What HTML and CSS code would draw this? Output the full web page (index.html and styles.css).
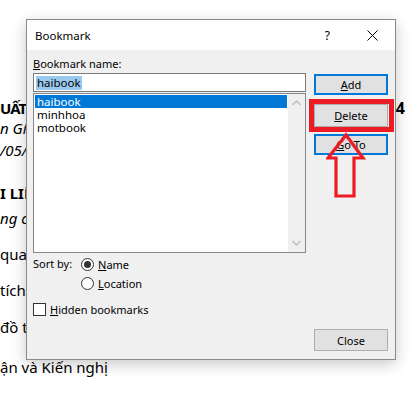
FILE: index.html
```html
<!DOCTYPE html>
<html>
<head>
<meta charset="utf-8">
<link rel="stylesheet" href="styles.css">
</head>
<body>
<div class="doc">
  <div class="row1 bold"><span class="first">UẤT</span><span class="four">4</span></div>
  <div class="line ital">n Gi</div>
  <div class="line ital g2">/05/</div>
  <div class="line bold g23">I LIỆ</div>
  <div class="line ital g5">ng c</div>
  <div class="line g16">qua</div>
  <div class="line g16">tích</div>
  <div class="line g17">đồ t</div>
  <div class="line g20">ận và Kiến nghị</div>
</div>

<div class="dialog">
  <div class="titlebar">
    <span class="title">Bookmark</span>
    <span class="help">?</span>
    <svg class="close-x" width="11" height="11" viewBox="0 0 11 11"><path d="M0.5 0.5 L10.5 10.5 M10.5 0.5 L0.5 10.5" stroke="#000" stroke-width="1" fill="none"/></svg>
  </div>
  <div class="body">
    <div class="left">
      <div class="label"><u>B</u>ookmark name:</div>
      <div class="input"><span class="sel">haibook</span></div>
      <div class="list">
        <div class="items">
          <div class="item active">haibook</div>
          <div class="item">minhhoa</div>
          <div class="item">motbook</div>
        </div>
        <div class="scroll">
          <svg width="9" height="6" viewBox="0 0 9 6"><path d="M0.5 5 L4.5 1 L8.5 5" stroke="#c2c2c2" stroke-width="1.6" fill="none"/></svg>
          <svg width="9" height="6" viewBox="0 0 9 6"><path d="M0.5 1 L4.5 5 L8.5 1" stroke="#c2c2c2" stroke-width="1.6" fill="none"/></svg>
        </div>
      </div>
      <div class="sort">
        <span class="sortlbl">Sort by:</span>
        <div class="radios">
          <div class="radio-row"><span class="radio on"><span class="dot"></span></span><span><u>N</u>ame</span></div>
          <div class="radio-row"><span class="radio"></span><span><u>L</u>ocation</span></div>
        </div>
      </div>
      <div class="check-row"><span class="check"></span><span><u>H</u>idden bookmarks</span></div>
    </div>
    <div class="right">
      <div class="btn focus b-add"><u>A</u>dd</div>
      <div class="btn b-del"><u>D</u>elete<span class="redbox"></span></div>
      <div class="btn focus b-go"><u>G</u>o To</div>
      <div class="btn b-close">Close</div>
    </div>
  </div>
</div>

<svg class="arrow" width="40" height="68" viewBox="0 0 40 68">
  <path d="M20 3 L37 26 L28 26 L28 64 L10 64 L10 26 L2 26 Z" fill="none" stroke="#ed1c24" stroke-width="3.2" stroke-linejoin="miter"/>
</svg>
</body>
</html>
```
FILE: styles.css
```css
html, body {
  margin: 0;
  padding: 0;
  background: #fff;
  width: 420px;
  height: 393px;
  overflow: hidden;
}

.doc {
  padding-top: 98px;
  font-family: "Noto Sans", "Open Sans", sans-serif;
  font-size: 15px;
  color: #000;
}

.line {
  height: 20px;
  line-height: 20px;
  white-space: nowrap;
}

.bold { font-weight: bold; }
.ital { font-style: italic; }
.row1 {
  height: 20px;
  line-height: 20px;
  display: flex;
  justify-content: space-between;
  padding-right: 15px;
}
.first { letter-spacing: -1px; }
.four { font-size: 16px; }
.g2 { margin-top: 2px; }
.g23 { margin-top: 23px; }
.g5 { margin-top: 5px; }
.g16 { margin-top: 16px; }
.g17 { margin-top: 17px; }
.g20 { margin-top: 20px; }

.dialog {
  position: absolute;
  left: 26px;
  top: 19px;
  width: 368px;
  height: 339px;
  border: 1px solid #8a8a8a;
  background: #f0f0f0;
  box-shadow: 0 4px 14px rgba(0, 0, 0, 0.22);
  display: flex;
  flex-direction: column;
  font-family: "Segoe UI", "Noto Sans", sans-serif;
  font-size: 11px;
  color: #000;
}

.titlebar {
  height: 30px;
  background: #fff;
  display: flex;
  align-items: center;
  padding-left: 8px;
  flex-shrink: 0;
}
.title { font-size: 11.5px; flex: 1; }
.help { font-size: 12px; margin-right: 37px; }
.close-x { margin-right: 17px; }

.body {
  flex: 1;
  display: flex;
  padding: 6px 7px 8px 6px;
  gap: 8px;
}

.left {
  width: 273px;
  display: flex;
  flex-direction: column;
}

.label {
  height: 16px;
  line-height: 16px;
}

.input {
  margin-top: 1px;
  height: 17px;
  border: 1px solid #7a7a7a;
  background: #fff;
  display: flex;
  align-items: center;
  padding-left: 2px;
  font-size: 11.5px;
}
.sel {
  background: #99c9ef;
  line-height: 14px;
  padding: 0 1px;
}

.list {
  margin-top: 1px;
  height: 158px;
  border: 1px solid #828790;
  background: #fff;
  display: flex;
}
.items {
  flex: 1;
  padding: 1px 1px;
  font-size: 11.5px;
}
.item {
  height: 13px;
  line-height: 13px;
  padding-left: 2px;
}
.item.active {
  background: #0078d7;
  color: #fff;
}
.scroll {
  width: 17px;
  background: #f0f0f0;
  display: flex;
  flex-direction: column;
  justify-content: space-between;
  align-items: center;
  padding: 6px 0 6px;
}

.sort {
  margin-top: 3px;
  display: flex;
}
.sortlbl {
  width: 48px;
  line-height: 16px;
}
.radios {
  display: flex;
  flex-direction: column;
  gap: 3px;
}
.radio-row {
  display: flex;
  align-items: center;
  gap: 4px;
  height: 16px;
}
.radio {
  width: 11px;
  height: 11px;
  border: 1px solid #333;
  border-radius: 50%;
  background: #fff;
  display: flex;
  align-items: center;
  justify-content: center;
}
.dot {
  width: 7px;
  height: 7px;
  border-radius: 50%;
  background: #333;
}

.check-row {
  margin-top: 10px;
  display: flex;
  align-items: center;
  gap: 4px;
  height: 16px;
}
.check {
  width: 11px;
  height: 11px;
  border: 1px solid #333;
  background: #fff;
}

.right {
  width: 74px;
  display: flex;
  flex-direction: column;
  padding-top: 18px;
}
.btn {
  box-sizing: border-box;
  height: 21px;
  border: 1px solid #adadad;
  background: #e1e1e1;
  display: flex;
  align-items: center;
  justify-content: center;
  position: relative;
}
.btn.focus {
  border: 2px solid #0078d7;
}
.b-del {
  margin-top: 9px;
  height: 23px;
}
.b-go { margin-top: 7px; }
.b-close { margin-top: auto; height: 22px; }

.redbox {
  position: absolute;
  left: -6px;
  top: -6px;
  right: -7px;
  bottom: -6px;
  border: 5px solid #ed1c24;
}

.arrow {
  position: absolute;
  left: 326px;
  top: 132px;
}
```
